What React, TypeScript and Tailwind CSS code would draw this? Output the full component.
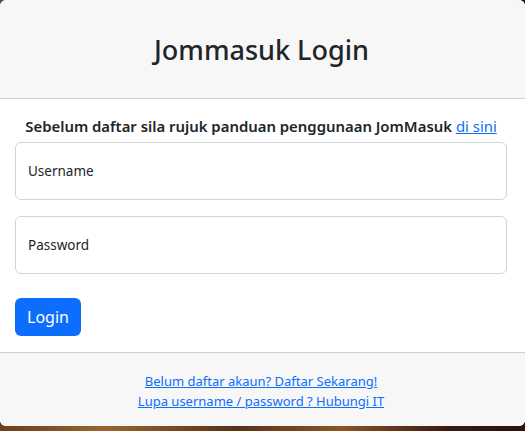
import React from 'react';

const font = { fontFamily: '"Noto Sans", "Open Sans", Arial, sans-serif' };

const FloatingInput: React.FC<{ label: string; type?: string }> = ({ label, type = 'text' }) => {
  return (
    <div className="relative h-[58px] w-full rounded-md border border-[#ced4da] bg-white">
      <input
        type={type}
        aria-label={label}
        className="absolute inset-0 h-full w-full rounded-md bg-transparent px-3 outline-none"
      />
      <span className="pointer-events-none absolute left-[12px] top-1/2 -translate-y-1/2 text-[13.5px] text-[#212529]">
        {label}
      </span>
    </div>
  );
};

export default function App() {
  return (
    <div
      className="min-h-[431px] w-full bg-[linear-gradient(90deg,#6b3f1c_0%,#9a6430_20%,#5a3218_45%,#8c5526_65%,#3a1a12_85%,#2a120c_100%)]"
      style={font}
    >
      <div className="h-[426px] overflow-hidden rounded-md bg-white flex flex-col">
        <div className="h-[99px] shrink-0 border-b border-[#d0d0d0] bg-[#f7f7f7] flex items-center justify-center pr-[2px]">
          <h1 className="text-[27px] font-medium leading-tight text-[#212529] pt-[1px]">Jommasuk Login</h1>
        </div>

        <div className="pl-[15px] pr-[18px] pt-[15px] pb-[16px] border-b border-[#d0d0d0]">
          <p className="text-center text-[14.9px] font-semibold leading-6 text-[#212529] mb-[4px]">
            Sebelum daftar sila rujuk panduan penggunaan JomMasuk{' '}
            <a href="#" className="font-normal text-[#0d6efd] underline">di sini</a>
          </p>
          <div className="flex flex-col gap-[16px]">
            <FloatingInput label="Username" />
            <FloatingInput label="Password" type="password" />
          </div>
          <button className="mt-[24px] h-[38px] rounded-md bg-[#0d6efd] px-3 text-[16px] text-white">
            Login
          </button>
        </div>

        <div className="flex-1 bg-[#f7f7f7] flex flex-col items-center pt-[18px] pr-[3px] text-[13px] leading-5">
          <a href="#" className="text-[#0d6efd] underline">Belum daftar akaun? Daftar Sekarang!</a>
          <a href="#" className="text-[#0d6efd] underline">Lupa username / password ? Hubungi IT</a>
        </div>
      </div>
    </div>
  );
}
